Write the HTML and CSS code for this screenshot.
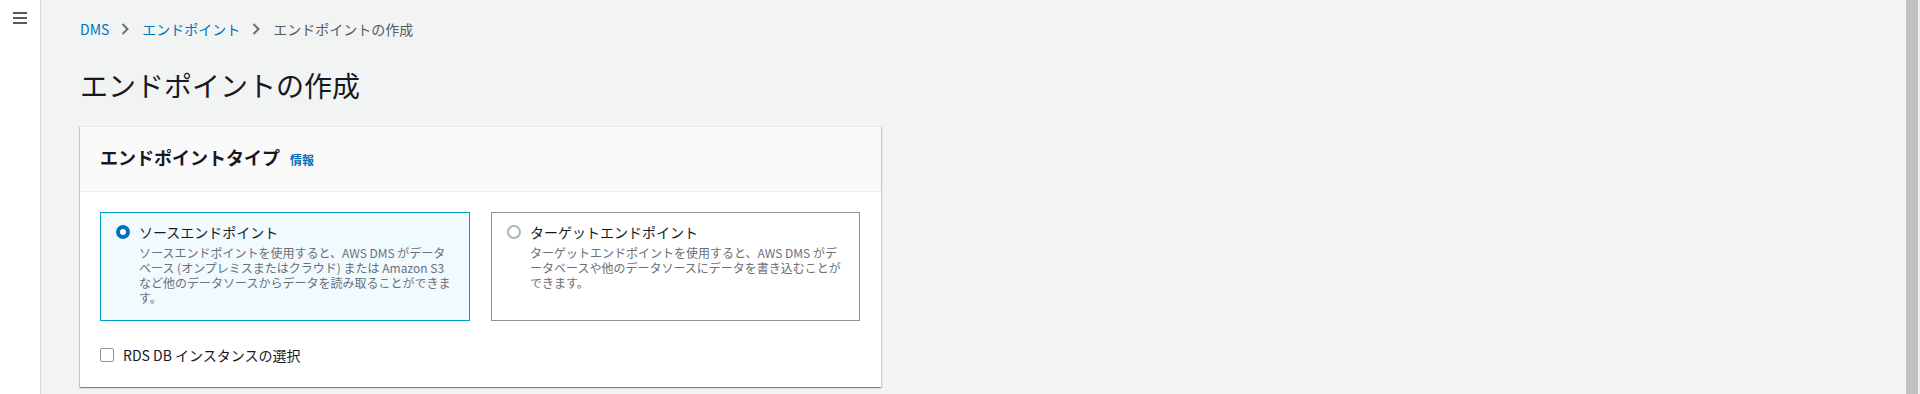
FILE: index.html
```html
<!DOCTYPE html>
<html lang="ja">
<head>
    <meta charset="UTF-8">
    <meta name="viewport" content="width=device-width, initial-scale=1.0">
    <title>エンドポイントの作成 | DMS</title>
    <link rel="stylesheet" href="styles.css">
</head>
<body>
    <nav class="side-nav">
        <button class="menu-toggle" aria-label="メニュー">
            <svg width="14" height="14" viewBox="0 0 14 14">
                <rect x="0" y="0" width="14" height="2" fill="#545b64"/>
                <rect x="0" y="5" width="14" height="2" fill="#545b64"/>
                <rect x="0" y="10" width="14" height="2" fill="#545b64"/>
            </svg>
        </button>
    </nav>

    <main class="content">
        <ol class="breadcrumbs">
            <li><a href="#">DMS</a></li>
            <li class="sep"><svg width="8" height="12" viewBox="0 0 8 12"><path d="M1.5 1l5 5-5 5" fill="none" stroke="#687078" stroke-width="2"/></svg></li>
            <li><a href="#">エンドポイント</a></li>
            <li class="sep"><svg width="8" height="12" viewBox="0 0 8 12"><path d="M1.5 1l5 5-5 5" fill="none" stroke="#687078" stroke-width="2"/></svg></li>
            <li class="current">エンドポイントの作成</li>
        </ol>

        <h1 class="page-title">エンドポイントの作成</h1>

        <section class="panel">
            <header class="panel-header">
                <h2>エンドポイントタイプ</h2>
                <a href="#" class="info-link">情報</a>
            </header>
            <div class="panel-body">
                <div class="tiles">
                    <label class="tile selected">
                        <span class="radio"></span>
                        <span class="tile-text">
                            <span class="tile-label">ソースエンドポイント</span>
                            <span class="tile-desc">ソースエンドポイントを使用すると、AWS DMS がデータベース (オンプレミスまたはクラウド) または Amazon S3 など他のデータソースからデータを読み取ることができます。</span>
                        </span>
                    </label>
                    <label class="tile">
                        <span class="radio"></span>
                        <span class="tile-text">
                            <span class="tile-label">ターゲットエンドポイント</span>
                            <span class="tile-desc">ターゲットエンドポイントを使用すると、AWS DMS がデータベースや他のデータソースにデータを書き込むことができます。</span>
                        </span>
                    </label>
                </div>
                <label class="check-row">
                    <span class="checkbox"></span>
                    <span>RDS DB インスタンスの選択</span>
                </label>
            </div>
        </section>
    </main>

    <div class="scrollbar"><div class="thumb"></div></div>
</body>
</html>
```

FILE: styles.css
```css
:root {
    --bg: #f2f3f3;
    --text: #16191f;
    --link: #0073bb;
    --muted: #687078;
    --grey: #545b64;
    --line: #eaeded;
    --control: #879596;
}
* {
    box-sizing: border-box;
}
body {
    margin: 0;
    height: 394px;
    overflow: hidden;
    display: flex;
    font-family: "Noto Sans CJK JP", "Noto Sans", sans-serif;
    color: var(--text);
    background: var(--bg);
}
.side-nav {
    width: 41px;
    flex-shrink: 0;
    background: #ffffff;
    border-right: 1px solid #d5dbdb;
}
.menu-toggle {
    display: block;
    border: 0;
    background: none;
    padding: 0;
    margin: 12px 0 0 13px;
    width: 14px;
    height: 14px;
    cursor: pointer;
}
.menu-toggle svg {
    display: block;
}
.content {
    flex: 1;
    padding: 19px 0 0 39px;
}
.breadcrumbs {
    list-style: none;
    margin: 0;
    padding: 0;
    display: flex;
    align-items: center;
    font-size: 14px;
    line-height: 20px;
}
.breadcrumbs a {
    color: var(--link);
    text-decoration: none;
}
.breadcrumbs .sep {
    display: flex;
    margin: 0 13px 0 12px;
}
.breadcrumbs .current {
    color: var(--grey);
}
.page-title {
    margin: 28px 0 23px;
    font-size: 28px;
    line-height: 36px;
    font-weight: 400;
    color: var(--text);
}
.panel {
    width: 801px;
    background: #ffffff;
    border-top: 1px solid var(--line);
    box-shadow: 0 1px 1px 0 rgba(0,28,36,0.3), 1px 1px 1px 0 rgba(0,28,36,0.15), -1px 1px 1px 0 rgba(0,28,36,0.15);
}
.panel-header {
    display: flex;
    align-items: baseline;
    gap: 10px;
    padding: 19px 20px 23px;
    background: #fafafa;
    border-bottom: 1px solid var(--line);
}
.panel-header h2 {
    margin: 0;
    font-size: 18px;
    line-height: 22px;
    font-weight: 700;
}
.info-link {
    font-size: 12px;
    font-weight: 700;
    color: var(--link);
    text-decoration: none;
}
.panel-body {
    padding: 20px 21px 22px 20px;
}
.tiles {
    display: grid;
    grid-template-columns: 370px 369px;
    gap: 21px;
}
.tile {
    display: flex;
    gap: 9px;
    padding: 9px 16px 15px 15px;
    border: 1px solid var(--control);
    background: #ffffff;
    cursor: pointer;
}
.tile.selected {
    border-color: #00a1c9;
    background: #f1faff;
}
.radio {
    flex-shrink: 0;
    width: 14px;
    height: 14px;
    margin-top: 3px;
    border-radius: 50%;
    border: 2px solid #aab7b8;
    background: #ffffff;
}
.tile.selected .radio {
    border: 4px solid var(--link);
}
.tile-text {
    display: flex;
    flex-direction: column;
}
.tile-label {
    font-size: 14px;
    line-height: 20px;
    color: var(--text);
}
.tile-desc {
    margin-top: 3px;
    font-size: 12px;
    line-height: 15px;
    color: var(--muted);
}
.check-row {
    display: flex;
    align-items: center;
    gap: 9px;
    margin-top: 24px;
    font-size: 14px;
    line-height: 20px;
    cursor: pointer;
}
.checkbox {
    width: 14px;
    height: 14px;
    border: 1px solid var(--control);
    border-radius: 2px;
    background: #ffffff;
}
.scrollbar {
    width: 15px;
    flex-shrink: 0;
    background: #f1f1f1;
    padding: 0 2px 0 1px;
}
.thumb {
    height: 100%;
    background: #c1c1c1;
}
```
